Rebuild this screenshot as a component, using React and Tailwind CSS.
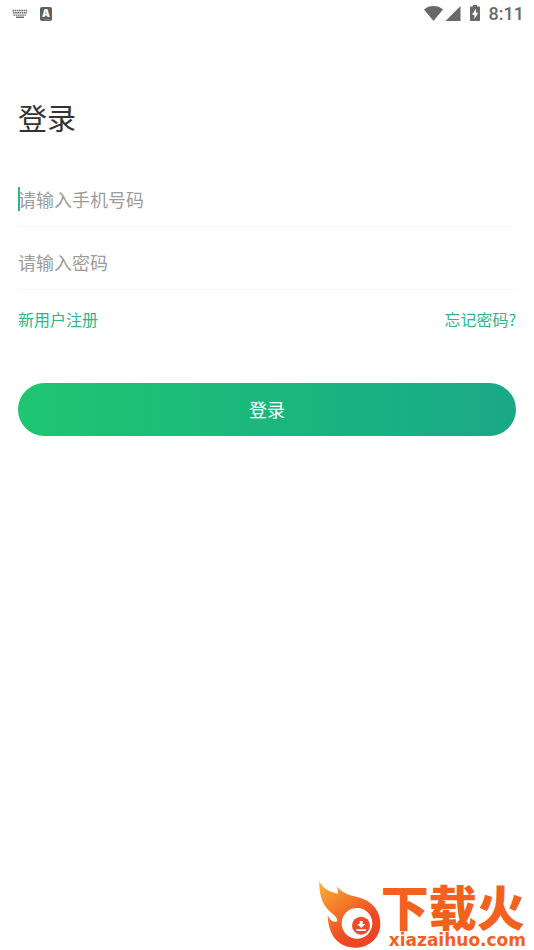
import React, { useState } from 'react';

const StatusBar = () => (
  <div className="flex h-7 items-center justify-between pl-3 pr-2.5 text-[#686868]">
    <div className="flex items-center gap-3">
      <svg className="h-3 w-4" viewBox="0 0 16 12" fill="none" stroke="currentColor" strokeWidth="1.4" aria-hidden="true">
        <path d="M0.5 2.500h15" strokeDasharray="1.6 0.6" />
        <path d="M1 4.800h14" strokeDasharray="1.6 0.6" />
        <path d="M1.500 7.100h13" strokeDasharray="1.6 0.6" />
        <path d="M4 9.300h8" />
      </svg>
      <div className="relative h-3.5 w-3 rounded-xs bg-[#5f5f5f] text-center font-['Inter'] text-[10px] font-black leading-[13px] text-white">
        A
        <span className="absolute bottom-px right-0.5 h-px w-1.5 bg-[#8a8a8a]" />
      </div>
    </div>
    <div className="flex items-center">
      <svg className="h-4 w-5" viewBox="0 0 20 16" fill="currentColor" aria-hidden="true">
        <path d="M10.500 15L1 3.400C3.700 1.200 6.900 0 10.500 0s6.800 1.200 9.500 3.400z" />
      </svg>
      <svg className="ml-0.5 h-4 w-4" viewBox="0 0 16 16" fill="currentColor" aria-hidden="true">
        <path d="M0.500 15L15.500 0v15z" />
      </svg>
      <svg className="ml-2 h-4.5 w-3" viewBox="0 -1 12 18" fill="currentColor" aria-hidden="true">
        <path fillRule="evenodd" d="M4 -1h4v1.600h2.200q0.800 0 0.800 0.800v12.800q0 0.800-0.800 0.800H1.800q-0.800 0-0.800-0.800V1.400q0-0.800 0.800-0.800H4zM7 2.500L3 8.700h2.400V13L9.300 6.700H7z" />
      </svg>
      <span className="ml-2 font-['Roboto'] text-lg font-medium leading-7">8:11</span>
    </div>
  </div>
);

const SiteLogo = () => (
  <div className="flex items-end text-[#f4611f]">
    <svg className="h-[67px] w-[62px]" viewBox="20 29 186 201" aria-hidden="true">
      <defs>
        <linearGradient id="flame" x1="0" y1="0" x2="0.7" y2="1">
          <stop offset="0" stopColor="#fbb03b" />
          <stop offset="0.4" stopColor="#f47b2a" />
          <stop offset="0.75" stopColor="#ee4a27" />
          <stop offset="1" stopColor="#ee4326" />
        </linearGradient>
      </defs>
      <path
        fill="url(#flame)"
        d="M21 30C32 52 50 62 77 67C77 57 76 50 72 42C82 58 99 69 126 75C174 84 204 114 204 157C204 199 171 229 128 229C82 229 48 197 46 132C52 146 62 155 75 150C75 136 66 133 50 118C27 96 20 65 21 30Z"
      />
      <circle cx="134" cy="156" r="46" fill="#fff" />
      <circle cx="146" cy="163" r="27" fill="#ee4b27" />
      <path fill="#fff" d="M142 149h9v9h8l-12.500 12-12.500-12h8zM132 174h29v5h-29z" />
    </svg>
    <div className="flex flex-col gap-1">
      <span className="font-['Noto_Sans_CJK_SC',sans-serif] text-[48px] font-black leading-[46px]">下载火</span>
      <span className="pl-2 font-['DejaVu_Sans',sans-serif] text-[17px] font-bold leading-4">xiazaihuo.com</span>
    </div>
  </div>
);

const App = () => {
  const [phone, setPhone] = useState('');
  const [password, setPassword] = useState('');

  return (
    <div className="flex min-h-screen flex-col bg-white font-['Noto_Sans_CJK_SC',sans-serif]">
      <StatusBar />

      <form className="px-[18px] pt-[67px]" onSubmit={(e) => e.preventDefault()}>
        <h1 className="text-[29px] leading-[44px] text-[#333333]">登录</h1>

        <div className="relative mt-[25px] border-b border-[#f7f7f7] pt-2">
          <input
            type="tel"
            aria-label="手机号码"
            placeholder="请输入手机号码"
            value={phone}
            onChange={(e) => setPhone(e.target.value)}
            className="block h-[54px] w-full text-lg text-[#333333] caret-[#2bb68b] outline-none placeholder:text-[#9c9c9c]"
          />
          {!phone && <span className="absolute left-0 top-[23px] h-6 w-0.5 bg-[#2bb68b]" />}
        </div>

        <div className="border-b border-[#f7f7f7] pt-2">
          <input
            type="password"
            aria-label="密码"
            placeholder="请输入密码"
            value={password}
            onChange={(e) => setPassword(e.target.value)}
            className="block h-[54px] w-full text-lg text-[#333333] outline-none placeholder:text-[#9c9c9c]"
          />
        </div>

        <div className="mt-[17px] flex justify-between text-base leading-6 text-[#2bb68b]">
          <a href="#register">新用户注册</a>
          <a href="#forgot">忘记密码?</a>
        </div>

        <button
          type="submit"
          className="mt-[52px] h-[53px] w-full rounded-full bg-linear-to-r from-[#1ec670] to-[#1aa888] pb-0.5 text-lg text-white"
        >
          登录
        </button>
      </form>

      <div className="mt-auto flex justify-end pb-0.5 pr-2">
        <SiteLogo />
      </div>
    </div>
  );
};

export default App;
